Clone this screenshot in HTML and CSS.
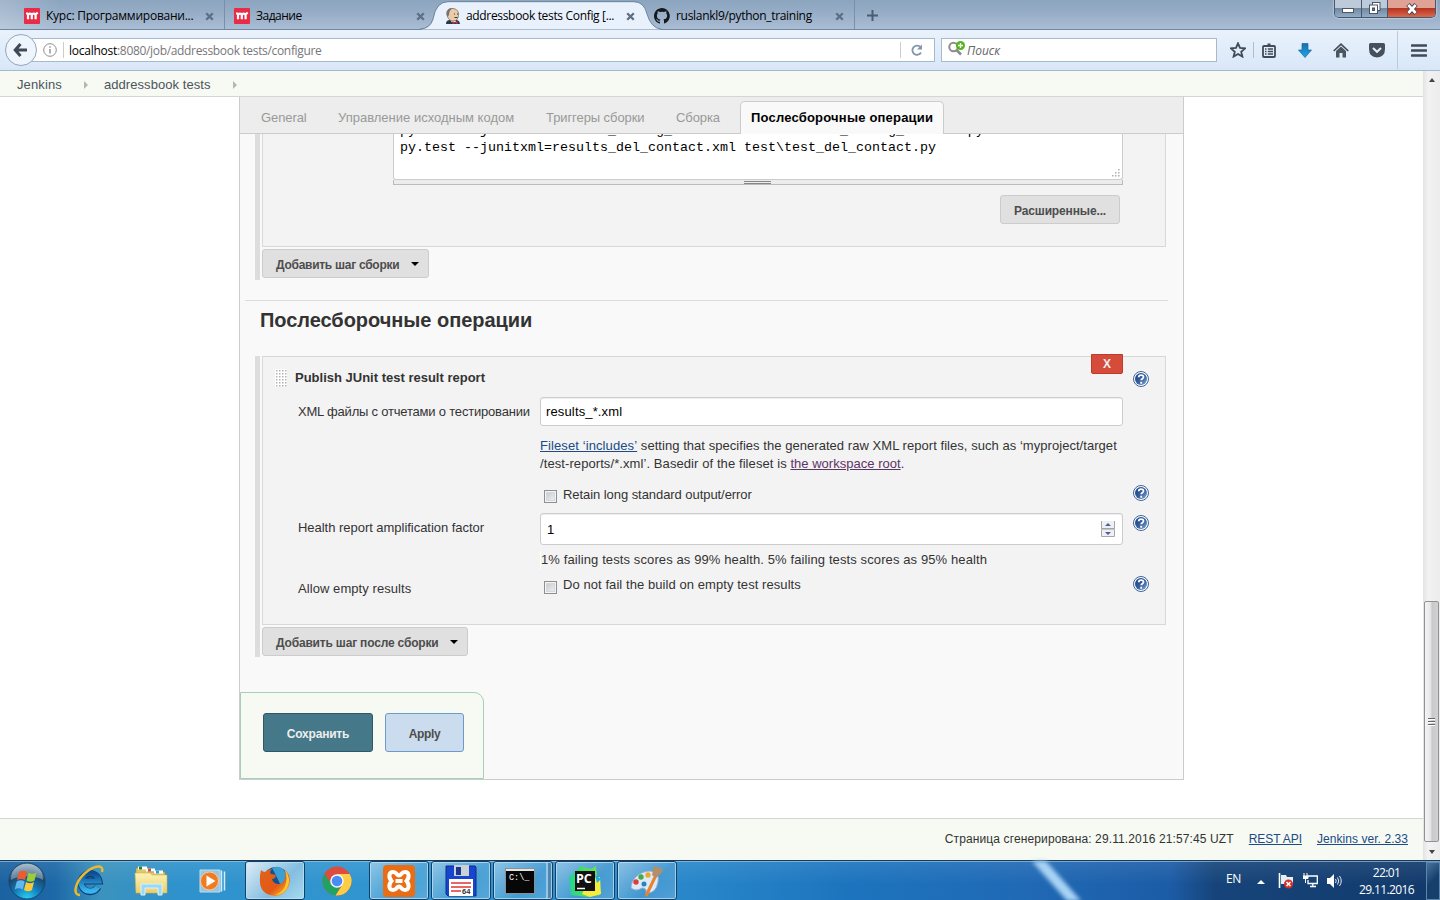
FILE: index.html
```html
<!DOCTYPE html>
<html lang="ru">
<head>
<meta charset="utf-8">
<title>addressbook tests Config [Jenkins]</title>
<link rel="stylesheet" href="styles.css">
</head>
<body>
<svg class="defs" width="0" height="0">
  <defs>
    <linearGradient id="gHelp" x1="0" y1="0" x2="1" y2="1"><stop offset="0" stop-color="#1c3f7c"/><stop offset=".55" stop-color="#36619f"/><stop offset="1" stop-color="#8eaed4"/></linearGradient>
    <linearGradient id="gBlue" x1="0" y1="0" x2="0" y2="1"><stop offset="0" stop-color="#1a6fa8"/><stop offset="1" stop-color="#1ca5ea"/></linearGradient>
    <radialGradient id="gOrb" cx=".5" cy="1" r="1"><stop offset="0" stop-color="#29d3fa"/><stop offset=".4" stop-color="#1378b4"/><stop offset=".7" stop-color="#1c4469"/><stop offset="1" stop-color="#9db7cb"/></radialGradient>
    <linearGradient id="gFox" x1="0" y1="0" x2="1" y2="1"><stop offset="0" stop-color="#e0621b"/><stop offset=".6" stop-color="#e35a16"/><stop offset="1" stop-color="#fbd03c"/></linearGradient>
    <linearGradient id="gIe" x1="0" y1="0" x2="0" y2="1"><stop offset="0" stop-color="#0c4d94"/><stop offset="1" stop-color="#35b8f1"/></linearGradient>
    <linearGradient id="gFolder" x1="0" y1="0" x2="0" y2="1"><stop offset="0" stop-color="#fdf3b5"/><stop offset="1" stop-color="#e9cf6f"/></linearGradient>
    <linearGradient id="gPc" x1="0" y1="0" x2="1" y2="0"><stop offset="0" stop-color="#20d68f"/><stop offset="1" stop-color="#7be044"/></linearGradient>
  </defs>
  <symbol id="help" viewBox="0 0 16 16">
    <circle cx="8" cy="8" r="7.500" fill="#fff" stroke="#3a649f"/>
    <circle cx="8" cy="8" r="6" fill="url(#gHelp)"/>
    <path d="M5.700 6.200C5.700 3.400 10.500 3.400 10.500 6c0 1.700-2.300 1.600-2.300 3.200M8.200 10.800v1.900" fill="none" stroke="#fff" stroke-width="1.800"/>
  </symbol>
  <symbol id="close" viewBox="0 0 9 9"><path d="M1.200 1.200l6.600 6.600M7.800 1.200L1.200 7.800" stroke="#5c6f84" stroke-width="2.300"/></symbol>
  <symbol id="moodle" viewBox="0 0 16 16">
    <rect width="16" height="16" rx="1" fill="#e82b47"/>
    <path d="M2 5.500h2M4 11.300V7.500Q4 5.700 5.900 5.700T7.800 7.500v3.800M7.800 7.500Q7.800 5.700 9.700 5.700T11.600 7.500v3.800M11.600 6.500Q12.500 5.500 13.800 4.600" fill="none" stroke="#fff" stroke-width="2.200"/>
  </symbol>
</svg>

<div class="screen">
  <header class="tabstrip">
    <div class="tab tab-first"><svg class="fav"><use href="#moodle"/></svg><span class="t-1">Курс: Программировани...</span><svg class="x"><use href="#close"/></svg></div>
    <div class="tab tab-second"><svg class="fav"><use href="#moodle"/></svg><span class="t-2">Задание</span><svg class="x"><use href="#close"/></svg></div>
    <div class="tab tab-active">
      <svg class="tab-shape" width="244" height="29" viewBox="0 0 244 29"><path d="M0 29.500Q10 29 13 20.500Q16 2 28 2H214Q224 2 227 14Q231 28 241 29.500Z" fill="#e9f2fc"/><path d="M0 29Q10 28.500 13 19Q16 1.700 28 1.700H214Q224 1.700 227 14Q231 28 241 29" fill="none" stroke="#71879f"/></svg>
      <svg class="fav" viewBox="0 0 16 16"><path d="M1 16q0-4 4-4h6q3.500 0 4 4z" fill="#24394b"/><path d="M4.500 10l2 4h4l1-4z" fill="#fff"/><path d="M2 7C1 2 4 0 8 .500s6 3 5.500 7S11 13 8 13 3 11 2 7z" fill="#e9cba9" stroke="#544a42" stroke-width=".6"/><path d="M2.500 9C0 3 4 0 8 .300 5 2 4 4 4 7z" fill="#77706b"/><path d="M9 6h1M12 6h1M9.500 9.500h3" stroke="#44352e"/><path d="M7.500 13l2.500 1.500 2.500-1.500v3L10 15l-2.500 1z" fill="#d3383d"/></svg>
      <span class="t-3">addressbook tests Config [...</span><svg class="x"><use href="#close"/></svg>
    </div>
    <div class="tab tab-last"><svg class="fav" viewBox="0 0 16 16"><path fill="#15191d" d="M8 0C3.600 0 0 3.600 0 8c0 3.500 2.300 6.500 5.500 7.600.4.100.5-.2.500-.4v-1.500c-2.200.5-2.700-.9-2.700-.9-.4-.9-.9-1.200-.9-1.200-.7-.5.100-.5.100-.5.800.1 1.200.8 1.200.8.700 1.300 1.900.9 2.300.7.100-.5.300-.9.500-1.100-1.800-.2-3.600-.9-3.600-4 0-.9.300-1.600.8-2.100-.1-.2-.4-1 .1-2.100 0 0 .7-.2 2.200.8a7.500 7.500 0 0 1 4 0c1.500-1 2.200-.8 2.200-.8.400 1.100.2 1.900.1 2.100.5.600.8 1.300.8 2.100 0 3.100-1.900 3.700-3.700 3.900.3.300.6.700.6 1.500v2.200c0 .2.100.5.600.4A8 8 0 0 0 8 0z"/></svg><span class="t-4">ruslankl9/python_training</span><svg class="x"><use href="#close"/></svg></div>
    <svg class="newtab" width="11" height="11"><path d="M5.500 0v11M0 5.500h11" stroke="#4b5d70" stroke-width="2"/></svg>
    <div class="winctl">
      <div class="wc"><svg width="12" height="6"><rect x=".5" y=".5" width="11" height="4" fill="#fff" stroke="#4d5664"/></svg></div>
      <div class="wc"><svg width="12" height="13"><rect x="3.500" y=".5" width="7.500" height="8" fill="#fff" stroke="#4d5664"/><rect x=".5" y="3" width="8" height="8.500" fill="#fff" stroke="#4d5664"/><rect x="3.500" y="6" width="2" height="2.500" fill="#68788b" stroke="#4d5664"/></svg></div>
      <div class="wc wc-close"><svg width="14" height="12"><path d="M3 1.500l8 9M11 1.500l-8 9" stroke="#4b3e4d" stroke-width="4.500"/><path d="M3.300 2l7.400 8M10.700 2l-7.400 8" stroke="#fff" stroke-width="2.700"/></svg></div>
    </div>
  </header>

  <nav class="navbar">
    <div class="back"><svg width="16" height="14"><path d="M7.500 1L2.200 7l5.300 6M2.500 7H14" fill="none" stroke="#3f4a56" stroke-width="3"/></svg></div>
    <div class="urlbar">
      <svg width="14" height="14"><circle cx="7" cy="7" r="6.300" fill="none" stroke="#8c8c8c"/><path d="M7 6v4.500M7 3.300v1.500" stroke="#8c8c8c" stroke-width="1.400"/></svg>
      <i class="url-sep"></i>
      <span class="url"><b>localhost</b>:8080/job/addressbook tests/configure</span>
      <i class="url-sep2"></i>
      <svg class="reload" width="12" height="12"><path d="M9.500 3.200A4.600 4.600 0 1 0 10 8.500" fill="none" stroke="#8195ab" stroke-width="1.800"/><path d="M11 .5V5.600H6z" fill="#8195ab"/></svg>
    </div>
    <div class="search">
      <svg width="18" height="17"><circle cx="5.500" cy="7" r="4.200" fill="none" stroke="#8c8c8c" stroke-width="2"/><path d="M8.500 10l4.500 4.500" stroke="#8c8c8c" stroke-width="2.600"/><circle cx="12.500" cy="5.500" r="4.500" fill="#51b51c"/><path d="M12.500 3v5M10 5.500h5" stroke="#fff" stroke-width="1.300"/></svg>
      <span>Поиск</span>
    </div>
    <svg class="n-star" width="16" height="16"><path d="M8 1.300l2 4.600 5 .5-3.800 3.300 1.200 4.900L8 12l-4.400 2.600 1.200-4.900L1 6.400l5-.5z" fill="none" stroke="#414b57" stroke-width="1.800"/></svg>
    <i class="n-sep"></i>
    <svg class="n-list" width="14" height="15"><path d="M4 3.500V2h1.500V.5h3V2H10v1.500" fill="#414b57"/><rect x="1" y="3" width="12" height="11" rx="1" fill="none" stroke="#414b57" stroke-width="1.800"/><path d="M3 6h1.500M3 8.500h1.500M3 11h1.500M5.800 6H11M5.800 8.500H11M5.800 11H11" stroke="#414b57" stroke-width="1.300"/></svg>
    <svg class="n-down" width="14" height="15"><path d="M4 .5h6V7h3.500L7 14.500.500 7H4z" fill="url(#gBlue)" stroke="#19659d" stroke-width=".7"/></svg>
    <svg class="n-home" width="16" height="15"><path d="M0.700 8L8 1.200 15.300 8" fill="none" stroke="#414b57" stroke-width="1.600"/><path d="M3 8l5-4.500L13 8v6.500H9.500V10h-3v4.500H3z" fill="#4c5661"/></svg>
    <svg class="n-pocket" width="16" height="15"><path d="M1.500 0h13Q16 0 16 1.500V6q0 8-8 8.500Q0 14 0 6V1.500Q0 0 1.500 0z" fill="#46505c"/><path d="M4 5l4 3.800L12 5" fill="none" stroke="#e8f1fb" stroke-width="2"/></svg>
    <i class="n-sep n-sep-tall"></i>
    <svg class="n-menu" width="16" height="13"><path d="M1 1.500h14M1 6.500h14M1 11.500h14" stroke="#414b57" stroke-width="2.600" stroke-linecap="round"/></svg>
  </nav>

  <div class="viewport">
    <div class="page">
      <div class="crumbs"><span class="c-1">Jenkins</span><i class="tri"></i><span class="c-2">addressbook tests</span><i class="tri"></i></div>
      <main class="panel">
        <div class="config-tabs">
          <span class="ct-1">General</span><span class="ct-2">Управление исходным кодом</span><span class="ct-3">Триггеры сборки</span><span class="ct-4">Сборка</span>
          <div class="ct-active"><span>Послесборочные операции</span></div>
        </div>
        <section class="repeat build">
          <div class="chunk chunk-top">
            <div class="code">
              <div class="line clip">py.test --junitxml=results_adding_contact.xml test\test_adding_contact.py</div>
              <div class="line">py.test --junitxml=results_del_contact.xml test\test_del_contact.py</div>
              <svg class="grip" width="9" height="9"><path d="M7 0h1.500v1.500H7zM4 3h1.500v1.500H4zM7 3h1.500v1.500H7zM1 6h1.500v1.500H1zM4 6h1.500v1.500H4zM7 6h1.500v1.500H7z" fill="#b0b0b0"/></svg>
            </div>
            <div class="resizer"><i></i></div>
            <div class="btn advanced"><span>Расширенные...</span></div>
          </div>
          <div class="btn add-build"><span>Добавить шаг сборки</span><i class="caret"></i></div>
        </section>
        <h2 class="section-title"><span>Послесборочные операции</span></h2>
        <section class="repeat post">
          <div class="chunk">
            <div class="delete">X</div>
            <div class="row r-title"><svg class="drag" width="12" height="18"><defs><pattern id="dots" width="3" height="3" patternUnits="userSpaceOnUse"><rect width="3" height="3" fill="#fff"/><rect x="1" y="1" width="1.500" height="1.500" fill="#b3b3b3"/></pattern></defs><rect width="12" height="18" fill="url(#dots)"/></svg><b class="title">Publish JUnit test result report</b><svg class="help"><use href="#help"/></svg></div>
            <div class="row r-xml"><label><span class="l-1">XML файлы с отчетами о тестировании</span></label><div class="input"><span class="i-1">results_*.xml</span></div></div>
            <div class="row r-desc"><div class="desc"><span class="d-1"><a>Fileset ‘includes’</a> setting that specifies the generated raw XML report files, such as ‘myproject/target</span><br><span class="d-2">/test-reports/*.xml’. Basedir of the fileset is <a class="visited">the workspace root</a>.</span></div></div>
            <div class="row r-check"><i class="checkbox"></i><span class="k-1">Retain long standard output/error</span><svg class="help"><use href="#help"/></svg></div>
            <div class="row r-num"><label><span class="l-2">Health report amplification factor</span></label><div class="input"><span>1</span><svg class="spin" width="14" height="16"><path d="M1 0h12v16H1z" fill="#f0f0f2"/><path d="M.5 0v15.500h13V0M0 7.500h14" fill="none" stroke="#a5a5ab"/><path d="M0 8.500h14" stroke="#c4c4c8"/><path d="M4 5l3-3 3 3zM4 11h6l-3 3z" fill="#4b5da0"/></svg></div><svg class="help"><use href="#help"/></svg></div>
            <div class="row r-health"><span>1% failing tests scores as 99% health. 5% failing tests scores as 95% health</span></div>
            <div class="row r-empty"><label><span class="l-3">Allow empty results</span></label><i class="checkbox"></i><span class="k-2">Do not fail the build on empty test results</span><svg class="help"><use href="#help"/></svg></div>
          </div>
          <div class="btn add-post"><span>Добавить шаг после сборки</span><i class="caret"></i></div>
        </section>
        <div class="savebar"><div class="save"><span>Сохранить</span></div><div class="apply"><span>Apply</span></div></div>
      </main>
      <footer><span class="f-1">Страница сгенерирована: 29.11.2016 21:57:45 UZT</span><a class="f-2">REST API</a><a class="f-3">Jenkins ver. 2.33</a></footer>
    </div>
    <aside class="scroll"><i class="arrow up"></i><div class="thumb"><i></i><i></i><i></i></div><i class="arrow down"></i></aside>
  </div>

  <div class="taskbar">
    <svg class="streak" width="80" height="40"><path d="M5-2h14L58 42H44z" fill="#a8d3f5"/></svg>
    <div class="start"><svg width="38" height="38"><circle cx="19" cy="19" r="18" fill="url(#gOrb)" stroke="#16466e"/><path d="M3 18C3 7 11 2 19 2s16 5 16 16c-8-5-24-5-32 0z" fill="#c4d4df" opacity=".45"/><path d="M11 10q4-3 8 0l-2 8q-4-2-8 0z" fill="#ee5c2d"/><path d="M20.500 10.500q4 2.500 8 0l-2 8q-4 2.500-8 0z" fill="#9bcc3a"/><path d="M8.700 19.500q4-2.500 8 0l-2 8q-4-2.500-8 0z" fill="#62b8ee"/><path d="M18 20q4 2.500 8 0l-2 8q-4 2.500-8 0z" fill="#fdc937"/></svg></div>
    <div class="pin"><svg width="34" height="34"><path d="M26 23A9 9 0 1 1 27 17H11" fill="none" stroke="#123e73" stroke-width="7"/><path d="M25.800 22.800A9 9 0 1 1 27 17H11" fill="none" stroke="url(#gIe)" stroke-width="5.200"/><path d="M8 31C-1 31 4 15 17 6 25 1 32 1 30 8" fill="none" stroke="#e9b92e" stroke-width="2.400"/></svg></div>
    <div class="pin"><svg width="34" height="32"><path d="M2 3h12v4h17v21H2z" fill="#e2c567" stroke="#9e8640" stroke-width=".6"/><path d="M4 3h9M12 5h9M20 7h9" stroke="#fff" stroke-width="3"/><path d="M5 3h3" stroke="#168a3c" stroke-width="3"/><path d="M14 5h3" stroke="#d64b32" stroke-width="3"/><path d="M22 7h3" stroke="#28a4dd" stroke-width="3"/><path d="M1 8h15l2 2h15v18H2z" fill="url(#gFolder)" stroke="#cfb45b" stroke-width=".6"/><path d="M7 30V19h21v11h-4v-7H11v7z" fill="#9bd8f3" stroke="#d9f3fd"/></svg></div>
    <div class="pin"><svg width="32" height="30"><path d="M3 4h20v22H3z" fill="#9ac5e1" stroke="#bddff1"/><path d="M24.500 4.500v21M27.500 5.500v19" stroke="#d4ecf9" stroke-width="1.500"/><circle cx="12.500" cy="15" r="9" fill="#f07c22" stroke="#fbc79d"/><path d="M9.500 9.500v11l9-5.500z" fill="#fff"/></svg></div>
    <div class="app app-on"><svg width="32" height="32"><circle cx="17" cy="15" r="13" fill="#12508e"/><path d="M13 3q10-4 14 6 2 8-5 12Q17 10 13 3z" fill="#3b9fd4"/><path d="M2 5q2 2 4 2 3-3 7-3-3 3-1 5 4 0 5 2-1 3-4 3 1 5 7 5 8-1 6-14 8 8 3 18-5 8-13 8Q4 30 1.500 21 0 13 2 5z" fill="url(#gFox)"/><path d="M26 5q7 9 2 18-4 7-12 7 8-3 10-9 3-7 0-16z" fill="#fbc82e"/></svg></div>
    <div class="pin pin-chrome"><svg width="30" height="30"><circle cx="15" cy="15" r="14.500" fill="#dd4d3f"/><path d="M2.400 7.800A14.500 14.500 0 0 0 13.500 29.400L20 18 9 17.500z" fill="#1ea362"/><path d="M27.700 8A14.500 14.500 0 0 1 13.500 29.400L21.500 17 15 8z" fill="#fdce45"/><circle cx="15" cy="15" r="6.800" fill="#f4f8f6"/><circle cx="15" cy="15" r="5.300" fill="#4b8bf4"/></svg></div>
    <div class="app"><svg width="32" height="32"><rect width="32" height="32" rx="4" fill="#e96d14"/><path d="M10 7c4 0 3.500 3.500 6 3.500S18 7 22 7s5 5 1.500 9c3.500 4 2.500 9-1.500 9s-3.500-3.500-6-3.500S14 25 10 25s-5-5-1.500-9C5 12 6 7 10 7z" fill="none" stroke="#fff" stroke-width="4"/><path d="M12.500 16h7" stroke="#fff" stroke-width="4"/></svg></div>
    <div class="app"><svg width="32" height="32"><path d="M1 1h29l1 1v29H3l-2-2z" fill="#1745cf" stroke="#102c81"/><rect x="9" y="0" width="15" height="11" fill="#cbd1d7"/><rect x="11" y="2" width="5" height="8" fill="#183792"/><rect x="4" y="14" width="24" height="17" fill="#fff"/><path d="M6 18h20M6 22h20M6 26h10" stroke="#dd3636" stroke-width="1.400"/><text x="17" y="29" font-family="Liberation Sans" font-weight="700" font-size="7.500" fill="#333">64</text></svg></div>
    <div class="app app-cmd"><svg width="30" height="26"><rect width="30" height="26" fill="#070707" stroke="#8b8f93" stroke-width="2"/><path d="M1 2h28" stroke="#e2e5e8" stroke-width="2"/><text x="4" y="12" font-family="Liberation Mono" font-size="8.500" fill="#fff">C:\_</text></svg></div>
    <div class="app"><svg width="34" height="32"><path d="M1 12L13 1l10 3 5-3 1 11 3 18-12 2L3 30z" fill="url(#gPc)"/><path d="M22 13l10-1 1 17-11 3-8-3z" fill="#f5ec3e"/><path d="M27 10l6 4-4 4z" fill="#12b7e8"/><rect x="7" y="6" width="20" height="20" fill="#111"/><path d="M9 23.500h8" stroke="#fff" stroke-width="1.500"/><text x="8" y="17.500" font-family="Open Sans" font-weight="700" font-size="12.500" fill="#fff">PC</text></svg></div>
    <div class="app"><svg width="34" height="34"><path d="M1 24C1 14 11 7 20 7q10 1 8 11-2 12-12 11 1-5-4-5-6 4-11 0z" fill="#dceafa" stroke="#94add0"/><circle cx="6" cy="18" r="2.700" fill="#db4036"/><circle cx="11" cy="13" r="2.700" fill="#47aa48"/><circle cx="18" cy="11" r="2.700" fill="#efa828"/><circle cx="14" cy="20" r="2.500" fill="#2e82bb"/><path d="M27 9L16 32" stroke="#e9822b" stroke-width="3"/><path d="M24 2l8 3 1 2-7 7-4-3z" fill="#b78d65"/></svg></div>
    <div class="tray">
      <span class="lang">EN</span>
      <svg class="tr-up" width="8" height="4"><path d="M0 4l4-4 4 4z" fill="#fff"/></svg>
      <svg class="tr-flag" width="16" height="16"><path d="M1.500 0v15" stroke="#fff" stroke-width="1.600"/><path d="M3 2h5l1 2h6v7H3z" fill="#e7edf3"/><circle cx="10.500" cy="11" r="4.500" fill="#d5312b"/><path d="M8.500 9l4 4M12.500 9l-4 4" stroke="#fff" stroke-width="1.500"/></svg>
      <svg class="tr-net" width="15" height="15"><path d="M4.500 3h9.800v7.500H5V7M7 13.500h6M9.800 10.500v3" fill="none" stroke="#fff" stroke-width="1.300"/><path d="M1 0v3M4 0v3M0 3h5v2.500H0zM2.500 5v5" fill="#fff" stroke="#fff"/></svg>
      <svg class="tr-vol" width="15" height="14"><path d="M0 4h3l4-4v14L3 10H0z" fill="#fff"/><path d="M8.500 5q1.500 2 0 4M10.500 3.500q2.500 3.500 0 7M12.500 2q3.500 5 0 10" fill="none" stroke="#e3ecf5"/></svg>
      <div class="clock"><span>22:01</span><span>29.11.2016</span></div>
      <div class="peek"></div>
    </div>
  </div>
</div>
</body>
</html>
```
FILE: styles.css
```css
* { box-sizing: border-box; }
body { margin: 0; font: 13px/18px "Liberation Sans", Arial, sans-serif; color: #333; }
svg { display: block; flex: none; }
i { font-style: normal; flex: none; }
span, a, b { white-space: nowrap; }
.defs { position: absolute; }
.screen { width: 1440px; height: 900px; display: flex; flex-direction: column; overflow: hidden; background: #fff; }

.tabstrip { height: 30px; flex: none; display: flex; border-bottom: 1px solid #71879f; background: linear-gradient(90deg, rgba(255,255,255,.2), transparent 60px), linear-gradient(#8ca5bf, #94abc5 35%, #a9bdd3); font: 12px/16px "Open Sans", sans-serif; color: #000; }
.tab { position: relative; height: 29px; display: flex; align-items: center; padding: 3px 0 0; }
.tab .fav { width: 16px; height: 16px; margin-right: 6px; position: relative; }
.tab span { position: relative; }
.t-1 { letter-spacing: -.24px; }
.t-2 { letter-spacing: -.5px; }
.t-3 { letter-spacing: -.33px; margin-left: -1px; }
.t-4 { letter-spacing: -.31px; }
.tab .x { width: 9px; height: 9px; margin-left: auto; position: relative; }
.tab-first { width: 225px; padding-left: 24px; padding-right: 10px; border-right: 1px solid #7990a8; }
.tab-second { width: 205px; padding-left: 9px; padding-right: 5px; }
.tab-active { width: 215px; padding-left: 15px; padding-right: 10px; z-index: 1; }
.tab-shape { position: absolute; left: -10px; top: 0; overflow: visible; }
.tab-last { width: 210px; padding-left: 9px; padding-right: 10px; border-right: 1px solid #7990a8; }
.newtab { margin: 10px 0 0 12px; }
.winctl { margin: 0 4px 0 auto; width: 102px; height: 18px; display: flex; border: 1px solid #46586d; border-top: 0; border-radius: 0 0 5px 5px; overflow: hidden; box-shadow: 0 0 2px #fff; }
.wc { width: 27px; display: flex; align-items: center; justify-content: center; background: linear-gradient(#bccada 45%, #71879f 48%, #93acc6); border-right: 1px solid #46586d; }
.wc:first-child svg { margin-top: 4px; }
.wc-close { width: 47px; border: 0; background: linear-gradient(#dfa295 45%, #b8321d 48%, #d76a4d); }

.navbar { height: 41px; flex: none; display: flex; align-items: center; background: linear-gradient(#e9f2fc, #d8e7f8); border-bottom: 1px solid #a3b7cf; font: 12px/16px "Open Sans", sans-serif; }
.back { width: 32px; height: 32px; margin-left: 5px; border: 1px solid #92a6bc; border-radius: 50%; background: #eff5fc; display: flex; align-items: center; justify-content: center; z-index: 1; }
.urlbar { height: 24px; width: 903px; margin-left: -5px; padding-left: 11px; border: 1px solid #a8b9cc; border-left: 0; background: #fff; display: flex; align-items: center; }
.url-sep { width: 1px; height: 16px; background: #ccc; margin: 0 5px 0 6px; }
.url { color: #777; letter-spacing: -.33px; padding-top: 1px; }
.url b { font-weight: 400; color: #000; letter-spacing: -.25px; }
.url-sep2 { width: 1px; height: 16px; background: #ccc; margin: 0 10px 0 auto; }
.reload { margin-right: 11px; }
.search { width: 276px; height: 24px; margin-left: 6px; padding-left: 6px; border: 1px solid #a8b9cc; background: #fff; display: flex; align-items: center; }
.search svg { margin-top: -3px; }
.search span { font-style: italic; color: #666; margin-left: 1px; padding-top: 1px; }
.n-star { margin-left: 13px; }
.n-sep { width: 1px; height: 16px; background: #aebdce; margin: 0 8px 0 7px; }
.n-down { margin-left: 22px; }
.n-home { margin-left: 21px; }
.n-pocket { margin-left: 20px; }
.n-sep-tall { height: 38px; background: #bccbdc; margin: 0 13px 0 12px; }

.viewport { height: 789px; flex: none; display: flex; }
.page { width: 1423px; display: flex; flex-direction: column; }
.crumbs { height: 26px; flex: none; display: flex; align-items: center; background: #f6faf2; border-bottom: 1px solid #d3d7cf; color: #4d545d; padding: 2px 0 0 17px; }
.tri { border: 4px solid transparent; border-left: 4px solid #b5b5b5; border-right: 0; margin-right: 1px; }
.c-1 { width: 67px; letter-spacing: .12px; }
.c-2 { width: 129px; margin-left: 15px; letter-spacing: .06px; }

.panel { width: 945px; height: 683px; flex: none; margin-left: 239px; border: 1px solid #ccc; border-top: 0; background: #f9f9f9; display: flex; flex-direction: column; }
.config-tabs { height: 37px; flex: none; display: flex; align-items: center; padding: 4px 0 0 21px; background: #ededed; border-bottom: 1px solid #ccc; color: #999; }
.config-tabs > span { padding-top: 1px; }
.ct-1 { width: 77px; letter-spacing: -.1px; }
.ct-2 { width: 208px; }
.ct-3 { width: 130px; letter-spacing: -.08px; }
.ct-4 { width: 64px; letter-spacing: -.1px; }
.ct-active { width: 204px; height: 34px; padding-left: 10px; display: flex; align-items: center; border: 1px solid #ccc; border-bottom: 0; border-radius: 5px 5px 0 0; background: #f9f9f9; color: #000; font-weight: 700; letter-spacing: .2px; margin-bottom: -1px; }
.repeat { border-left: 5px solid #ddd; margin-left: 15px; padding-left: 2px; width: 911px; flex: none; }
.build { height: 146px; }
.chunk { position: relative; border: 1px solid #d8d8d8; background: #f3f3f3; width: 904px; }
.chunk-top { height: 113px; border-top: 0; padding-left: 130px; }
.code { position: relative; width: 730px; height: 46px; padding-left: 6px; overflow: hidden; background: #fff; border: 1px solid #ccc; border-top: 0; border-radius: 0 0 3px 3px; font: 13.33px/17px "Liberation Mono", monospace; color: #000; }
.line { height: 17px; white-space: pre; }
.line.clip { margin-top: -12px; }
.grip { position: absolute; right: 2px; bottom: 1px; }
.resizer { width: 730px; height: 5px; border: 1px solid #bbb; border-top: 0; background: #ececec; display: flex; justify-content: center; padding-top: 1px; }
.resizer i { width: 27px; height: 3px; margin-right: 1px; border: 1px solid #888; border-width: 1px 0; }
.btn { height: 29px; display: flex; align-items: center; padding: 2px 0 0 13px; border: 1px solid #ccc; border-radius: 3px; background: #e0e0e0; color: #4d4d4d; font-weight: 700; font-size: 12px; }
.advanced { width: 120px; margin: 10px 0 0 607px; letter-spacing: -.14px; }
.add-build { width: 167px; margin-top: 2px; letter-spacing: -.27px; }
.add-post { width: 206px; margin-top: 2px; letter-spacing: -.18px; }
.caret { border: 4px solid transparent; border-top-color: #000; border-bottom: 0; margin: -2px 9px 0 auto; }
.section-title { height: 56px; flex: none; width: 923px; margin: 20px 0 0 5px; padding: 9px 0 0 15px; border-top: 1px solid #ddd; font-size: 20px; line-height: 20px; letter-spacing: -.04px; }
.post { height: 301px; }
.post .chunk { height: 269px; }
.delete { position: absolute; left: 828px; top: -3px; width: 32px; height: 20px; border: 1px solid #c43a2a; border-radius: 0 0 2px 2px; background: #d54c3b; color: #eee; font-size: 12px; font-weight: 700; text-align: center; line-height: 19px; }
.row { display: flex; align-items: flex-start; }
.row label { width: 242px; padding-left: 0; }
.help { width: 16px; height: 16px; margin-left: auto; margin-right: 16px; }
.r-title { height: 40px; padding: 12px 0 0 12px; }
.title { margin-left: 8px; }
.r-title .help { margin-top: 2px; }
.r-xml { height: 29px; padding-left: 35px; }
.r-xml label { padding-top: 6px; letter-spacing: -.2px; }
.i-1 { letter-spacing: .14px; }
.input { width: 583px; height: 29px; display: flex; align-items: center; padding-left: 5px; border: 1px solid #ccc; border-radius: 3px; background: #fff; color: #000; box-shadow: inset 0 1px 1px rgba(0,0,0,.07); }
.r-desc { height: 58px; padding: 11px 0 0 277px; }
.d-1 { letter-spacing: .046px; }
.d-1 a { letter-spacing: .1px; }
.d-2 { letter-spacing: .085px; }
.d-2 a { letter-spacing: .02px; }
a { color: #204a87; text-decoration: underline; }
a.visited { color: #5c3566; }
.r-check { height: 29px; padding: 1px 0 0 281px; }
.checkbox { width: 13px; height: 13px; border: 1px solid #8e8f8f; background: linear-gradient(135deg, #bfc4cb, #f6f6f6); box-shadow: inset 0 0 0 1px #f4f4f4, inset 0 0 0 2px #d4d7db; margin-right: 6px; }
.r-check .checkbox { margin-top: 5px; }
.k-1 { margin-top: 1px; letter-spacing: -.06px; }
.r-num { height: 36px; padding-left: 35px; }
.r-num label { padding-top: 6px; letter-spacing: -.03px; }
.r-num .input { height: 32px; padding-left: 6px; }
.r-num .input span { padding-top: 1px; }
.spin { margin: 0 7px 0 auto; }
.r-num .help { margin-top: 2px; }
.r-health { height: 26px; padding: 2px 0 0 277px; }
.r-health span { border-left: 1px solid #fff; letter-spacing: .107px; }
.r-empty { padding-left: 35px; }
.r-empty label { width: 246px; padding-top: 5px; letter-spacing: .07px; }
.r-empty .checkbox { margin-top: 6px; }
.k-2 { margin-top: 1px; letter-spacing: .07px; }
.r-empty .help { margin-top: 1px; }
.savebar { width: 244px; height: 87px; margin: 35px 0 0; flex: none; border: 1px solid #a9cdbb; border-radius: 0 10px 0 0; background: #f6faf2; display: flex; padding: 20px 0 0 22px; font-size: 12px; font-weight: 700; letter-spacing: -.2px; }
.save, .apply { height: 39px; border-radius: 3px; display: flex; align-items: center; justify-content: center; padding-top: 2px; }
.save { width: 110px; background: #457888; border: 1px solid #2e5867; color: #eee; }
.apply { width: 79px; margin-left: 12px; background: #cadcee; border: 1px solid #6d9acb; color: #4d4d4d; letter-spacing: -.35px; }
footer { height: 42px; margin-top: auto; flex: none; border-top: 1px solid #d3d7cf; background: #f6faf2; display: flex; align-items: center; justify-content: flex-end; gap: 15px; padding: 0 15px 1px 0; font-size: 12px; }
.f-1 { letter-spacing: .12px; }
.f-2 { letter-spacing: -.08px; }
.f-3 { letter-spacing: .06px; }

.scroll { width: 17px; display: flex; flex-direction: column; align-items: center; background: linear-gradient(90deg, #e3e3e3, #f2f2f2 30%, #ececec); }
.arrow { border: 3px solid transparent; }
.up { border-bottom: 4px solid #444; border-top: 0; margin-top: 7px; }
.down { border-top: 4px solid #444; border-bottom: 0; margin-top: 8px; }
.thumb { width: 15px; height: 241px; margin-top: 519px; border: 1px solid #919191; border-radius: 2px; background: linear-gradient(90deg, #f4f4f4, #e8e8e8 40%, #c9c9cd 55%, #d2d2d4); display: flex; flex-direction: column; align-items: center; justify-content: center; gap: 1px; }
.thumb i { width: 7px; height: 2px; background: #666; border-bottom: 1px solid #fff; }

.taskbar { position: relative; height: 40px; flex: none; display: flex; align-items: center; border-top: 1px solid #1b3a5a; box-shadow: inset 0 1px 0 rgba(160,210,240,.6); background: linear-gradient(rgba(255,255,255,.08), transparent 60%), linear-gradient(90deg, #1b62a0 0, #1d68a7 55px, #3b92bd 100px, #2f92cc 180px, #3196d0 400px, #2a8acb 660px, #1d74be 850px, #2068b4 1040px, #1c5ca6 1170px, #16447a 1215px, #123a6b 1440px); }
.streak { position: absolute; left: 1025px; top: 0; filter: blur(2px); }
.start { width: 59px; padding-left: 8px; }
.pin { width: 62px; display: flex; justify-content: center; padding-right: 2px; }
.app { width: 60px; height: 39px; margin-right: 2px; display: flex; align-items: center; justify-content: center; border: 1px solid #144067; border-radius: 3px; box-shadow: inset 0 0 0 1px rgba(190,225,245,.75); background: linear-gradient(135deg, rgba(255,255,255,.42), rgba(255,255,255,.1) 60%, rgba(255,255,255,.2)); }
.app-on { background: linear-gradient(135deg, #e0edf5, #83bde0 60%, #a8dbf0); }
.app-cmd { box-shadow: inset 0 0 0 1px rgba(190,225,245,.75), inset -5px 0 0 -1px rgba(20,70,110,.5), inset -6px 0 0 0 rgba(190,225,245,.6); padding-right: 7px; }
.tray { position: relative; margin-left: auto; height: 39px; display: flex; align-items: center; color: #fff; font: 12px/17px "Open Sans", sans-serif; }
.lang { margin-top: -5px; width: 31px; letter-spacing: -.3px; }
.tr-up { margin-top: 2px; }
.tr-flag { margin-left: 13px; }
.tr-net { margin-left: 9px; }
.tr-vol { margin-left: 9px; }
.clock { width: 80px; margin-left: 4px; text-align: center; display: flex; flex-direction: column; letter-spacing: -.6px; padding: 1px 0 0 1px; }
.peek { width: 14px; height: 38px; border: 1px solid #5e86ad; background: linear-gradient(135deg, #4a729c, #173f6e 50%); }
```
